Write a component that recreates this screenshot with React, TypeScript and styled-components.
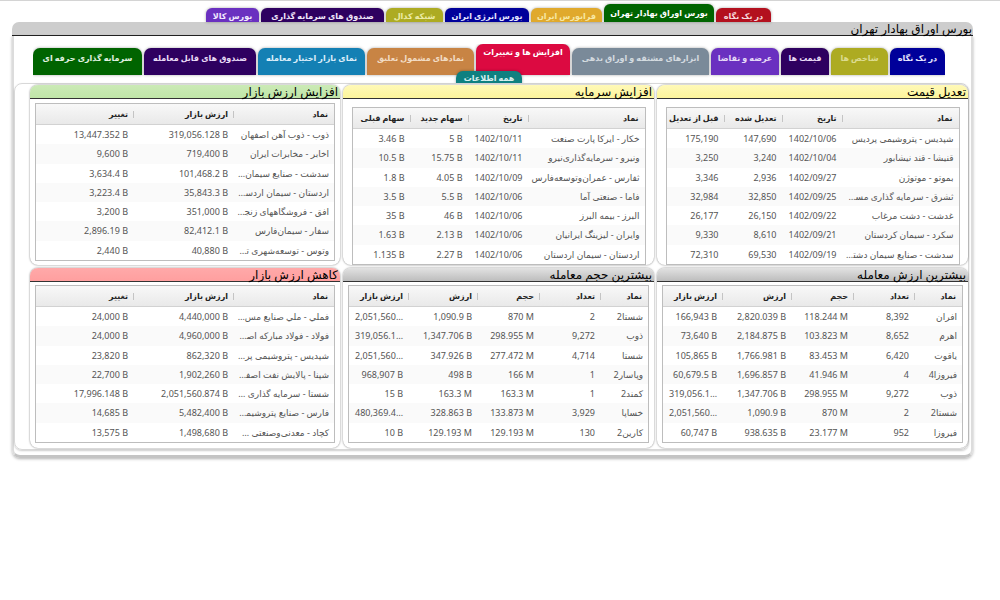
import React from "react";
import styled, { createGlobalStyle } from "styled-components";

const GlobalStyle = createGlobalStyle`
  html, body {
    margin: 0;
    padding: 0;
    background: #fff;
    font-family: "Noto Sans", "DejaVu Sans", sans-serif;
  }
`;

const Page = styled.div`
  width: 1000px;
  height: 600px;
  box-sizing: border-box;
  border-top: 1px solid #d4d4d4;
  padding: 3px 27px 0 12px;
  overflow: hidden;
  direction: rtl;
`;

const TopTabs = styled.nav`
  display: flex;
  align-items: flex-end;
  gap: 2px;
  height: 18px;
  padding-right: 202px;
`;

const TopTab = styled.a<{ $w: number; $bg: string; $fg: string; $active?: boolean }>`
  flex: none;
  box-sizing: border-box;
  width: ${({ $w }) => $w}px;
  height: ${({ $active }) => ($active ? 18 : 14)}px;
  padding-top: ${({ $active }) => ($active ? 3 : 2)}px;
  border-radius: 6px 6px 0 0;
  background: ${({ $bg }) => $bg};
  color: ${({ $fg }) => $fg};
  box-shadow: 0 0 3px rgba(0, 0, 0, 0.35);
  font-size: 8px;
  font-weight: bold;
  line-height: 11px;
  text-align: center;
  white-space: nowrap;
  overflow: hidden;
`;

const TitleBar = styled.h1`
  margin: 0;
  height: 13px;
  padding-right: 1px;
  border-radius: 7px 7px 0 0;
  border-bottom: 1px solid #222;
  background: #cdcdcd;
  color: #000;
  font-size: 12px;
  font-weight: normal;
  line-height: 13px;
  white-space: nowrap;
`;

const MainBody = styled.div`
  box-sizing: border-box;
  height: 422px;
  padding: 8px 2px 0 0;
  border-left: 2px solid #dcdcdc;
  border-right: 2px solid #dcdcdc;
  border-bottom: 3px solid #c4c4c4;
  border-radius: 0 0 8px 8px;
  box-shadow: 0 1px 3px rgba(0, 0, 0, 0.3);
`;

const SubTabs = styled.nav`
  display: flex;
  flex-wrap: wrap;
  justify-content: center;
  align-items: flex-end;
  align-content: flex-start;
  column-gap: 2px;
  box-sizing: border-box;
  width: 912px;
  height: 39px;
  margin-right: 24px;
  overflow: hidden;
`;

const SubTab = styled.a<{ $w: number; $bg: string; $fg: string; $active?: boolean }>`
  flex: none;
  box-sizing: border-box;
  width: ${({ $w }) => $w}px;
  height: ${({ $active }) => ($active ? 31 : 27)}px;
  padding-top: ${({ $active }) => ($active ? 2 : 4)}px;
  border-radius: 7px 7px 0 0;
  background: ${({ $bg }) => $bg};
  color: ${({ $fg }) => $fg};
  box-shadow: 0 0 3px rgba(0, 0, 0, 0.35);
  font-size: 8px;
  font-weight: bold;
  line-height: 12px;
  text-align: center;
  white-space: nowrap;
  overflow: hidden;
`;

const AllTab = styled(SubTab)`
  height: 13px;
  margin-top: -4px;
  padding-top: 1px;
`;

const Content = styled.div`
  box-sizing: border-box;
  height: 367px;
  padding: 1px 0 0 15px;
  border: 1px solid #d8d8d8;
  border-radius: 8px;
  box-shadow: 0 1px 2px rgba(0, 0, 0, 0.2);
`;

const PanelGrid = styled.div`
  display: grid;
  grid-template-columns: 311px 311px 310px;
  grid-auto-rows: 180px;
  gap: 3px;
`;

const Panel = styled.section`
  overflow: hidden;
  border-radius: 8px;
  background: #fff;
  box-shadow: 0 0 2px rgba(0, 0, 0, 0.55);
`;

const PanelTitle = styled.h2<{ $bg: string }>`
  margin: 0;
  height: 13px;
  padding-right: 2px;
  border-bottom: 1px solid #333;
  background: ${({ $bg }) => $bg};
  color: #000;
  font-size: 12px;
  font-weight: normal;
  line-height: 13px;
  white-space: nowrap;
`;

const DataTable = styled.div<{ $w: number; $top: number }>`
  box-sizing: border-box;
  width: ${({ $w }) => $w}px;
  margin: ${({ $top }) => $top}px auto 0;
  border: 1px solid #bdbdbd;
  background: #fff;
`;

const HeadRow = styled.div<{ $cols: string }>`
  display: grid;
  grid-template-columns: ${({ $cols }) => $cols};
  height: 20px;
  border-bottom: 1px solid #d2d2d2;
  background: linear-gradient(#f8f8f8, #e9e9e9);
`;

const HeadCell = styled.div`
  padding: 0 6px 0 4px;
  background: linear-gradient(#c4c4c4, #c4c4c4) no-repeat right center / 1px 7px;
  color: #222;
  font-size: 8px;
  font-weight: bold;
  line-height: 20px;
  text-align: right;
  white-space: nowrap;
  overflow: hidden;

  &:first-child {
    background: none;
  }
`;

const DataRow = styled.div<{ $cols: string }>`
  display: grid;
  grid-template-columns: ${({ $cols }) => $cols};
  height: 19.3px;

  &:nth-child(even) {
    background: #fafafa;
  }
`;

const NameCell = styled.div`
  padding: 0 5px 0 3px;
  color: #555;
  font-size: 9px;
  line-height: 19px;
  text-align: right;
  white-space: nowrap;
  overflow: hidden;
  text-overflow: ellipsis;
`;

const NumCell = styled.div`
  padding: 0 6px;
  color: #555;
  font-size: 9px;
  line-height: 19px;
  direction: ltr;
  text-align: right;
  white-space: nowrap;
  overflow: hidden;
  text-overflow: ellipsis;
`;

type PanelData = {
  title: string;
  color: string;
  width: number;
  top: number;
  cols: string;
  head: string[];
  rows: string[][];
};

const topTabs = [
  { label: "در یک نگاه", w: 55, bg: "#b3101e", fg: "#f6d9dc" },
  { label: "بورس اوراق بهادار تهران", w: 110, bg: "#006400", fg: "#fff", active: true },
  { label: "فرابورس ایران", w: 71, bg: "#e0a92c", fg: "#f7e8a4" },
  { label: "بورس انرژی ایران", w: 84, bg: "#00009a", fg: "#e6e6ff" },
  { label: "شبکه کدال", w: 57, bg: "#adab22", fg: "#eceba6" },
  { label: "صندوق های سرمایه گذاری", w: 123, bg: "#2e0060", fg: "#f0e6fa" },
  { label: "بورس کالا", w: 53, bg: "#6a30c0", fg: "#f2e9ff" },
];

const subTabs = [
  { label: "در یک نگاه", w: 55, bg: "#00009a", fg: "#e6e6ff" },
  { label: "شاخص ها", w: 57, bg: "#adab22", fg: "#dcdc90" },
  { label: "قیمت ها", w: 48, bg: "#2e0060", fg: "#eadcf7" },
  { label: "عرضه و تقاضا", w: 68, bg: "#6a30c0", fg: "#e6dbf7" },
  { label: "ابزارهای مشتقه و اوراق بدهی", w: 137, bg: "#7a8a99", fg: "#d4dbe0" },
  { label: "افزایش ها و تغییرات", w: 94, bg: "#dc0a41", fg: "#fff", active: true },
  { label: "نمادهای مشمول تعلیق", w: 107, bg: "#c88444", fg: "#f2dcc4" },
  { label: "نمای بازار اختیار معامله", w: 107, bg: "#1480b4", fg: "#dceefa" },
  { label: "صندوق های قابل معامله", w: 112, bg: "#2e0060", fg: "#eadcf7" },
  { label: "سرمایه گذاری حرفه ای", w: 109, bg: "#006400", fg: "#e0f2e0" },
];

const fourCols = "116px 60px 58px 1fr";
const fiveCols = "47px 61px 62px 69px 1fr";
const threeCols = "100px 100px 1fr";

const panels: PanelData[] = [
  {
    title: "تعدیل قیمت",
    color: "linear-gradient(#fff9b8, #fdf59c)",
    width: 294,
    top: 8,
    cols: fourCols,
    head: ["نماد", "تاریخ", "تعدیل شده", "قبل از تعدیل"],
    rows: [
      ["شپدیس - پتروشیمی پردیس", "1402/10/06", "147,690", "175,190"],
      ["قنیشا - قند نیشابور", "1402/10/04", "3,240", "3,250"],
      ["بموتو - موتوژن", "1402/09/27", "2,936", "3,346"],
      ["ثشرق - سرمایه گذاری مسکن شرق", "1402/09/25", "32,850", "32,984"],
      ["غدشت - دشت مرغاب", "1402/09/22", "26,150", "26,177"],
      ["سکرد - سیمان کردستان", "1402/09/21", "8,610", "9,330"],
      ["سدشت - صنایع سیمان دشتستان", "1402/09/19", "69,530", "72,310"],
    ],
  },
  {
    title: "افزایش سرمایه",
    color: "linear-gradient(#fff9b8, #fdf59c)",
    width: 294,
    top: 8,
    cols: fourCols,
    head: ["نماد", "تاریخ", "سهام جدید", "سهام قبلی"],
    rows: [
      ["خکار - ایرکا پارت صنعت", "1402/10/11", "5 B", "3.46 B"],
      ["ونیرو - سرمایه‌گذاری‌نیرو", "1402/10/11", "15.75 B", "10.5 B"],
      ["ثفارس - عمران‌وتوسعه‌فارس", "1402/10/09", "4.05 B", "1.8 B"],
      ["فاما - صنعتی آما", "1402/10/06", "5.5 B", "3.5 B"],
      ["البرز - بیمه البرز", "1402/10/06", "46 B", "35 B"],
      ["وایران - لیزینگ ایرانیان", "1402/10/06", "2.13 B", "1.63 B"],
      ["اردستان - سیمان اردستان", "1402/10/06", "2.27 B", "1.135 B"],
    ],
  },
  {
    title: "افزایش ارزش بازار",
    color: "linear-gradient(#cbeab6, #c0e6a8)",
    width: 300,
    top: 4,
    cols: threeCols,
    head: ["نماد", "ارزش بازار", "تغییر"],
    rows: [
      ["ذوب - ذوب آهن اصفهان", "319,056.128 B", "13,447.352 B"],
      ["اخابر - مخابرات ایران", "719,400 B", "9,600 B"],
      ["سدشت - صنایع سیمان دشتستان", "101,468.2 B", "3,634.4 B"],
      ["اردستان - سیمان اردستان", "35,843.3 B", "3,223.4 B"],
      ["افق - فروشگاههای زنجیره ای افق", "351,000 B", "3,200 B"],
      ["سفار - سیمان‌فارس", "82,412.1 B", "2,896.19 B"],
      ["وتوس - توسعه‌شهری توس گستر", "40,880 B", "2,440 B"],
    ],
  },
  {
    title: "بیشترین ارزش معامله",
    color: "linear-gradient(#e2e2e2, #bdbdbd)",
    width: 301,
    top: 3,
    cols: fiveCols,
    head: ["نماد", "تعداد", "حجم", "ارزش", "ارزش بازار"],
    rows: [
      ["افران", "8,392", "118.244 M", "2,820.039 B", "166,943 B"],
      ["اهرم", "8,652", "103.823 M", "2,184.875 B", "73,640 B"],
      ["یاقوت", "6,420", "83.453 M", "1,766.981 B", "105,865 B"],
      ["فیروزا4", "4", "41.946 M", "1,696.857 B", "60,679.5 B"],
      ["ذوب", "9,272", "298.955 M", "1,347.706 B", "319,056.128 B"],
      ["شستا2", "2", "870 M", "1,090.9 B", "2,051,560.874 B"],
      ["فیروزا", "952", "23.177 M", "938.635 B", "60,747 B"],
    ],
  },
  {
    title: "بیشترین حجم معامله",
    color: "linear-gradient(#e2e2e2, #bdbdbd)",
    width: 301,
    top: 3,
    cols: fiveCols,
    head: ["نماد", "تعداد", "حجم", "ارزش", "ارزش بازار"],
    rows: [
      ["شستا2", "2", "870 M", "1,090.9 B", "2,051,560.874 B"],
      ["ذوب", "9,272", "298.955 M", "1,347.706 B", "319,056.128 B"],
      ["شستا", "4,714", "277.472 M", "347.926 B", "2,051,560.874 B"],
      ["وپاسار2", "1", "166 M", "498 B", "968,907 B"],
      ["کمند2", "1", "163.3 M", "163.3 M", "15 B"],
      ["خساپا", "3,929", "133.873 M", "328.863 B", "480,369.412 B"],
      ["کارین2", "130", "129.193 M", "129.193 M", "10 B"],
    ],
  },
  {
    title: "کاهش ارزش بازار",
    color: "linear-gradient(#ffa9a9, #ff9f9f)",
    width: 300,
    top: 3,
    cols: threeCols,
    head: ["نماد", "ارزش بازار", "تغییر"],
    rows: [
      ["فملي - ملي صنايع مس ايران", "4,440,000 B", "24,000 B"],
      ["فولاد - فولاد مباركه اصفهان", "4,960,000 B", "24,000 B"],
      ["شپدیس - پتروشیمی پردیس", "862,320 B", "23,820 B"],
      ["شپنا - پالایش نفت اصفهان", "1,902,260 B", "22,700 B"],
      ["شستا - سرمایه گذاری تامین اجتماعی", "2,051,560.874 B", "17,996.148 B"],
      ["فارس - صنایع پتروشیمی خلیج فارس", "5,482,400 B", "14,685 B"],
      ["کچاد - معدنی‌وصنعتی چادرملو", "1,498,680 B", "13,575 B"],
    ],
  },
];

export default function App() {
  return (
    <Page>
      <GlobalStyle />
      <TopTabs>
        {topTabs.map((t) => (
          <TopTab key={t.label} $w={t.w} $bg={t.bg} $fg={t.fg} $active={t.active}>
            {t.label}
          </TopTab>
        ))}
      </TopTabs>
      <TitleBar>بورس اوراق بهادار تهران</TitleBar>
      <MainBody>
        <SubTabs>
          {subTabs.map((t) => (
            <SubTab key={t.label} $w={t.w} $bg={t.bg} $fg={t.fg} $active={t.active}>
              {t.label}
            </SubTab>
          ))}
          <AllTab $w={66} $bg="#0f8080" $fg="#d8f0f0">
            همه اطلاعات
          </AllTab>
        </SubTabs>
        <Content>
          <PanelGrid>
            {panels.map((p) => (
              <Panel key={p.title}>
                <PanelTitle $bg={p.color}>{p.title}</PanelTitle>
                <DataTable $w={p.width} $top={p.top}>
                  <HeadRow $cols={p.cols}>
                    {p.head.map((h) => (
                      <HeadCell key={h}>{h}</HeadCell>
                    ))}
                  </HeadRow>
                  <div>
                    {p.rows.map((r) => (
                      <DataRow key={r[0]} $cols={p.cols}>
                        <NameCell>{r[0]}</NameCell>
                        {r.slice(1).map((v, i) => (
                          <NumCell key={i}>{v}</NumCell>
                        ))}
                      </DataRow>
                    ))}
                  </div>
                </DataTable>
              </Panel>
            ))}
          </PanelGrid>
        </Content>
      </MainBody>
    </Page>
  );
}
